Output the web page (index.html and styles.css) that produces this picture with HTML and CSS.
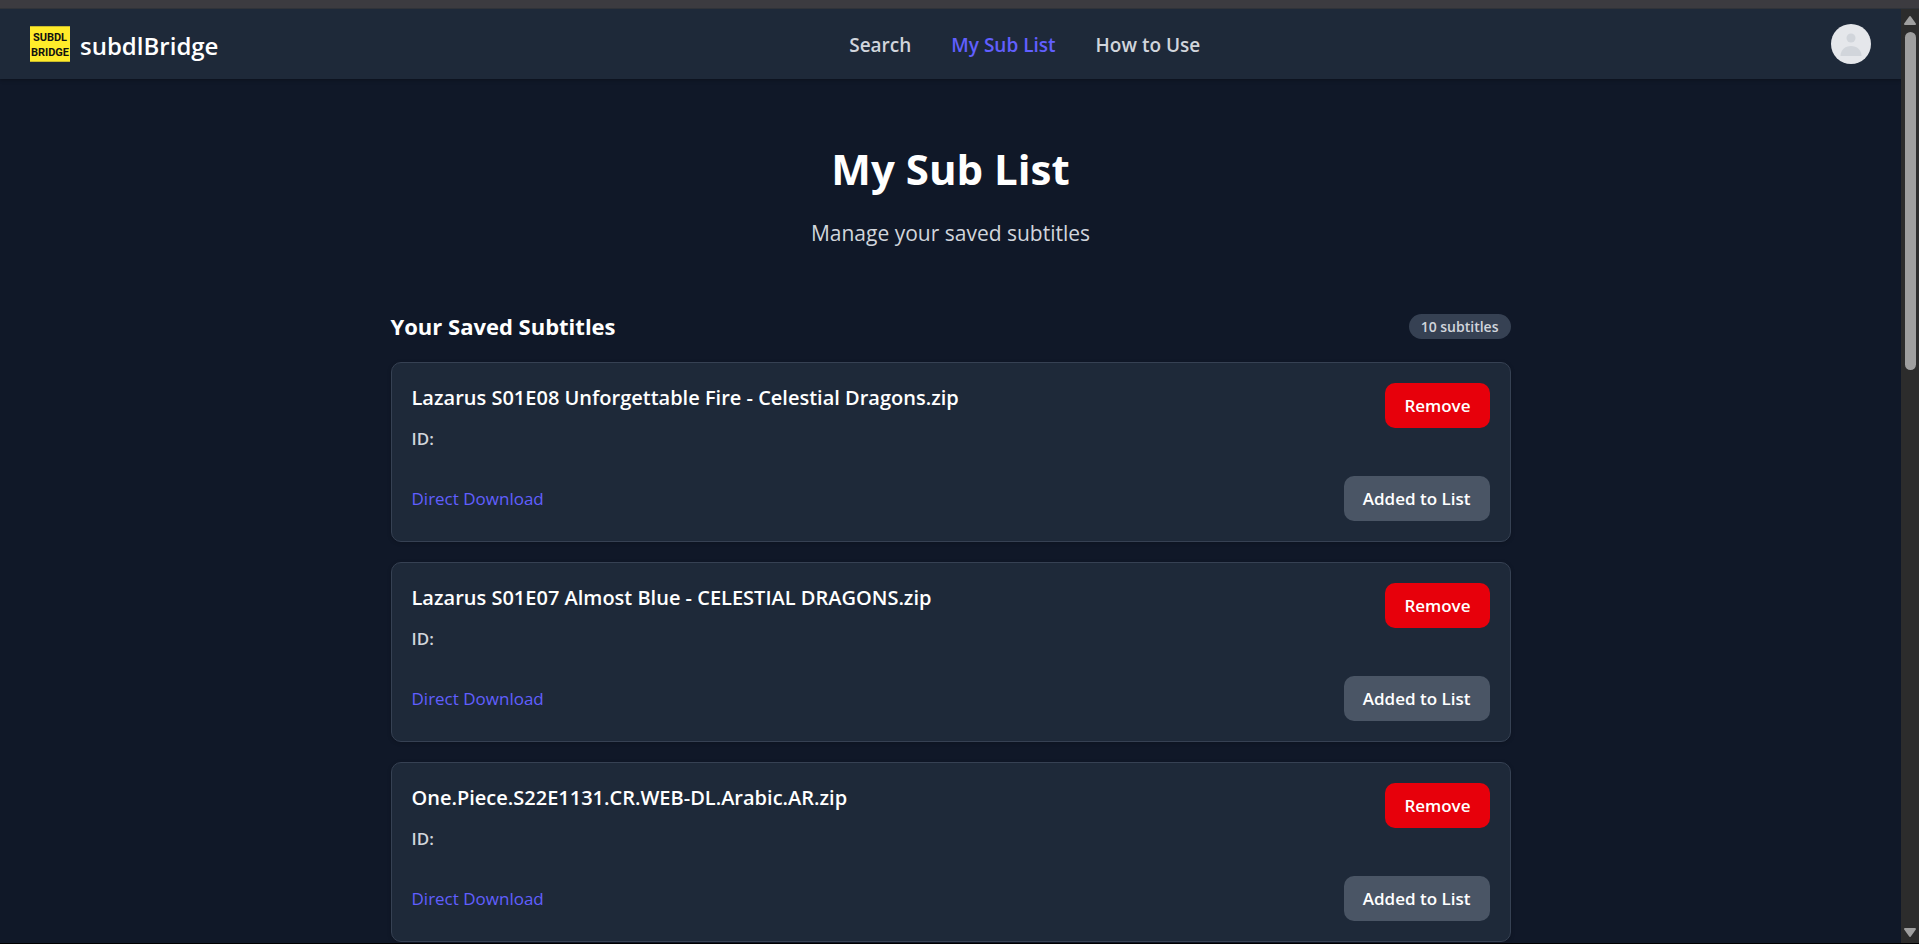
FILE: index.html
```html
<!DOCTYPE html>
<html lang="en">
<head>
<meta charset="utf-8">
<title>My Sub List - subdlBridge</title>
<link rel="stylesheet" href="styles.css">
</head>
<body>
<div class="window-edge"></div>
<div class="viewport">
  <div class="page">
    <header class="navbar">
      <a class="brand" href="#">
        <svg class="brand-logo" width="40" height="36" viewBox="0 0 40 36" aria-hidden="true">
          <rect width="40" height="36" fill="#ffeb2a"/>
          <path d="M0 .5h40M0 35.5h40" stroke="#c9bb2b"/>
          <text class="logo-text" x="20" y="15" text-anchor="middle">SUBDL</text>
          <text class="logo-text" x="20" y="30" text-anchor="middle">BRIDGE</text>
        </svg>
        <span class="brand-name">subdlBridge</span>
      </a>
      <nav class="nav-links">
        <a href="#">Search</a>
        <a class="active" href="#" aria-current="page">My Sub List</a>
        <a href="#">How to Use</a>
      </nav>
      <button class="avatar" type="button" aria-label="Account">
        <svg width="40" height="40" viewBox="0 0 40 40" aria-hidden="true">
          <circle cx="20" cy="20" r="20" fill="#e5e7eb"/>
          <circle cx="20" cy="14" r="4.500" fill="#d1d5db"/>
          <path d="M9.5 32c0-6 4.500-10 10.500-10s10.500 4 10.500 10z" fill="#d1d5db"/>
        </svg>
      </button>
    </header>
    <main class="content">
      <section class="hero">
        <h1>My Sub List</h1>
        <p>Manage your saved subtitles</p>
      </section>
      <div class="list-head">
        <h2>Your Saved Subtitles</h2>
        <span class="badge">10 subtitles</span>
      </div>
      <div class="list">
        <article class="card">
          <div class="card-top">
            <div class="info">
              <h3>Lazarus S01E08 Unforgettable Fire - Celestial Dragons.zip</h3>
              <p>ID:</p>
            </div>
            <button class="btn btn-remove" type="button">Remove</button>
          </div>
          <div class="card-bottom">
            <a href="#">Direct Download</a>
            <button class="btn btn-added" type="button">Added to List</button>
          </div>
        </article>
        <article class="card">
          <div class="card-top">
            <div class="info">
              <h3>Lazarus S01E07 Almost Blue - CELESTIAL DRAGONS.zip</h3>
              <p>ID:</p>
            </div>
            <button class="btn btn-remove" type="button">Remove</button>
          </div>
          <div class="card-bottom">
            <a href="#">Direct Download</a>
            <button class="btn btn-added" type="button">Added to List</button>
          </div>
        </article>
        <article class="card">
          <div class="card-top">
            <div class="info">
              <h3>One.Piece.S22E1131.CR.WEB-DL.Arabic.AR.zip</h3>
              <p>ID:</p>
            </div>
            <button class="btn btn-remove" type="button">Remove</button>
          </div>
          <div class="card-bottom">
            <a href="#">Direct Download</a>
            <button class="btn btn-added" type="button">Added to List</button>
          </div>
        </article>
      </div>
    </main>
  </div>
  <div class="scrollbar" aria-hidden="true">
    <svg width="14" height="12" viewBox="0 0 14 12"><path d="M7 3l5 7h-10z" fill="#9f9f9f" stroke="#9f9f9f" stroke-width="2" stroke-linejoin="round"/></svg>
    <div class="track"><div class="thumb"></div></div>
    <svg width="14" height="12" viewBox="0 0 14 12"><path d="M7 9l5-7h-10z" fill="#9f9f9f" stroke="#9f9f9f" stroke-width="2" stroke-linejoin="round"/></svg>
  </div>
</div>
</body>
</html>
```
FILE: styles.css
```css
* { box-sizing: border-box; margin: 0; }

body {
  height: 100vh;
  display: flex;
  flex-direction: column;
  overflow: hidden;
  background: #101828;
  border-bottom: 1px solid #000;
  color: #d1d5dc;
  font-family: "Open Sans", "Noto Sans", sans-serif;
  font-size: 17px;
}

a { color: inherit; text-decoration: none; }

.window-edge {
  flex: none;
  height: 9px;
  background: #3c3b40;
  border-bottom: 1px solid #303339;
}

.viewport {
  flex: 1;
  min-height: 0;
  display: flex;
}

.page {
  flex: 1;
  min-width: 0;
  overflow: hidden;
}

.navbar {
  display: flex;
  justify-content: space-between;
  align-items: center;
  height: 70px;
  padding: 0 30px;
  background: #1e2939;
  box-shadow: 0 1px 4px rgba(0, 0, 0, 0.3);
}

.brand {
  display: flex;
  align-items: flex-end;
  gap: 10px;
}

.logo-text {
  font: bold 11px "Liberation Sans Narrow", Roboto, sans-serif;
  fill: #111;
}

.brand-name {
  color: #fff;
  font-size: 24px;
  font-weight: 600;
  line-height: 32px;
}

.nav-links {
  display: flex;
  gap: 40px;
  padding-top: 2px;
  font-size: 19px;
  font-weight: 600;
}

.nav-links .active { color: #615fff; }

.avatar {
  display: flex;
  padding: 0;
  border: 0;
  border-radius: 50%;
  background: none;
}

.content {
  max-width: 1120px;
  margin: 0 auto;
  padding-top: 60px;
}

.hero { text-align: center; }

.hero h1 {
  color: #fff;
  font-size: 42px;
  font-weight: 700;
  line-height: 60px;
}

.hero p {
  margin-top: 16px;
  font-size: 21px;
  line-height: 36px;
}

.list-head {
  display: flex;
  justify-content: space-between;
  align-items: center;
  margin: 57px 0 18px;
}

.list-head h2 {
  color: #fff;
  font-size: 22px;
  font-weight: 700;
  line-height: 36px;
}

.badge {
  padding: 0 12px;
  border-radius: 13px;
  background: #364153;
  font-size: 14px;
  font-weight: 600;
  line-height: 25px;
}

.list {
  display: grid;
  gap: 20px;
}

.card {
  padding: 20px;
  border: 1px solid #364153;
  border-radius: 10px;
  background: #1e2939;
  box-shadow: 0 1px 4px rgba(0, 0, 0, 0.2);
}

.card-top {
  display: flex;
  justify-content: space-between;
  align-items: flex-start;
}

.card h3 {
  color: #fff;
  font-size: 20px;
  font-weight: 600;
  line-height: 30px;
}

.card p {
  margin-top: 13px;
  font-weight: 600;
  line-height: 26px;
}

.card-bottom {
  display: flex;
  justify-content: space-between;
  align-items: center;
  margin-top: 24px;
}

.card-bottom a { color: #615fff; }

.btn {
  height: 45px;
  padding: 0 19px;
  border: 0;
  border-radius: 10px;
  color: #fff;
  font: 600 17px "Open Sans", "Noto Sans", sans-serif;
}

.btn-remove { background: #e7000b; }
.btn-added { background: #4a5565; }

.scrollbar {
  flex: none;
  width: 18px;
  padding: 5px 0 4px;
  display: flex;
  flex-direction: column;
  align-items: center;
  gap: 6px;
  background: #2c2c2c;
}

.scrollbar svg { flex: none; }

.track { flex: 1; }

.thumb {
  width: 11px;
  height: 38%;
  border-radius: 6px;
  background: #9f9f9f;
}
```
